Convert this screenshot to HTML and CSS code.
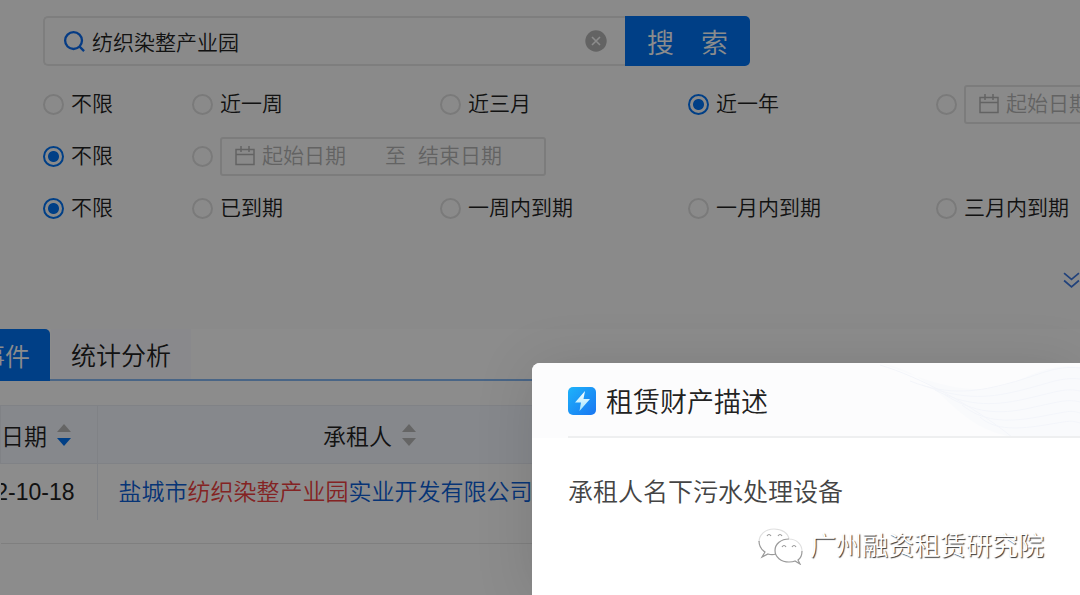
FILE: index.html
```html
<!DOCTYPE html>
<html lang="zh-CN">
<head>
<meta charset="utf-8">
<title>租赁财产描述</title>
<link rel="stylesheet" href="styles.css">
</head>
<body>
<svg class="defs" aria-hidden="true">
  <symbol id="calendar" viewBox="0 0 22 20"><path d="M2 3.500h18v15H2zM2 8.500h18M7 0v6M15 0v6" fill="none" stroke="currentColor" stroke-width="1.5"/></symbol>
</svg>
<main class="page">
  <section class="filters">
    <form class="search">
      <div class="search-box">
        <svg class="search-icon" viewBox="0 0 24 24"><circle cx="11" cy="11" r="8.8"/><path d="M17.3 17.3L22 22"/></svg>
        <input class="search-input" type="text" aria-label="搜索" value="纺织染整产业园">
        <button class="clear" type="button" aria-label="清除"><svg viewBox="0 0 22 22"><circle cx="11" cy="11" r="10.7"/><path d="M7 7l8 8M15 7l-8 8"/></svg></button>
      </div>
      <button class="search-button" type="button">搜&emsp;索</button>
    </form>
    <div class="options">
      <label class="option"><input type="radio" name="publish">不限</label>
      <label class="option"><input type="radio" name="publish">近一周</label>
      <label class="option"><input type="radio" name="publish">近三月</label>
      <label class="option"><input type="radio" name="publish" checked>近一年</label>
      <div class="option"><input type="radio" name="publish" aria-label="自定义日期">
        <div class="range"><svg><use href="#calendar"/></svg><input type="text" aria-label="起始日期" placeholder="起始日期"><span>至</span><input type="text" aria-label="结束日期" placeholder="结束日期"></div>
      </div>
    </div>
    <div class="options">
      <label class="option"><input type="radio" name="start" checked>不限</label>
      <div class="option"><input type="radio" name="start" aria-label="自定义日期">
        <div class="range"><svg><use href="#calendar"/></svg><input type="text" aria-label="起始日期" placeholder="起始日期"><span>至</span><input type="text" aria-label="结束日期" placeholder="结束日期"></div>
      </div>
    </div>
    <div class="options">
      <label class="option"><input type="radio" name="due" checked>不限</label>
      <label class="option"><input type="radio" name="due">已到期</label>
      <label class="option"><input type="radio" name="due">一周内到期</label>
      <label class="option"><input type="radio" name="due">一月内到期</label>
      <label class="option"><input type="radio" name="due">三月内到期</label>
    </div>
    <button class="expand" type="button" aria-label="展开"><svg viewBox="0 0 16 16"><path d="M1 1l7 6 7-6M1 8l7 6 7-6"/></svg></button>
  </section>
  <nav class="tabs">
    <button class="tab tab-active" type="button">事件</button>
    <button class="tab" type="button">统计分析</button>
  </nav>
  <table class="results">
    <thead>
      <tr>
        <th class="date"><div class="head">案日期<svg class="sort" viewBox="0 0 14 22"><path class="off" d="M7 0l7 8H0z"/><path class="on" d="M7 22l7-8H0z"/></svg></div></th>
        <th class="lessee"><div class="head">承租人<svg class="sort" viewBox="0 0 14 22"><path class="off" d="M7 0l7 8H0z"/><path class="off" d="M7 22l7-8H0z"/></svg></div></th>
        <th></th>
      </tr>
    </thead>
    <tbody>
      <tr>
        <td class="date"><div class="cell">2-10-18</div></td>
        <td class="lessee"><a href="#">盐城市<em>纺织染整产业园</em>实业开发有限公司</a></td>
        <td></td>
      </tr>
    </tbody>
  </table>
</main>
<div class="backdrop"></div>
<section class="dialog" role="dialog" aria-labelledby="dialog-title">
  <header class="dialog-head">
    <svg class="waves" viewBox="0 0 200 74" preserveAspectRatio="xMaxYMid slice">
      <path class="wave-fill" d="M0 0C65 12 68 62 132 74H200V4C150-2 140 32 82 25C58 22 38 14 0 0z"/>
      <path d="M0 2C40 14 92 42 132 74M30 18C70 34 100 28 130 20S175 2 200 5M42 22C80 36 105 36 138 28S180 14 200 16M55 27C85 42 110 44 145 36S185 25 200 28M65 32C95 50 118 52 150 45S188 36 200 39M82 42C102 58 125 60 158 54S190 47 200 50M100 54C115 68 140 66 165 62S190 57 200 60"/>
    </svg>
    <svg class="bolt" viewBox="0 0 28 28">
      <defs><linearGradient id="sky" x2="1" y2="1"><stop stop-color="#1eb3fa"/><stop offset="1" stop-color="#1976f2"/></linearGradient><linearGradient id="glow" x2="0" y2="1"><stop stop-color="#fff"/><stop offset="1" stop-color="#9ee4ff"/></linearGradient></defs>
      <rect width="28" height="28" rx="5" fill="url(#sky)"/><path d="M17 4L7 15.500h6L11.500 24 22 12h-6.500z" fill="url(#glow)"/>
    </svg>
    <h2 id="dialog-title">租赁财产描述</h2>
  </header>
  <p class="dialog-text">承租人名下污水处理设备</p>
  <footer class="watermark">
    <svg viewBox="0 0 46 38">
      <path class="faint" d="M16 2C7 2 1 8 1 15M16 2c8 0 14 4 15 10M31 12c7 0 13 5 13 12"/>
      <path d="M1 14c0 6 3 9 6 11l-3 5 6-3c3 1 5 1 8 0"/>
      <path d="M31 12c-8 0-14 5-14 11.500S23 35 31 35c2 0 4 0 6-1l5 3-2-4c3-2 4-5 4-9"/>
      <path d="M9 9q2-3 4 0M20 9q2-3 4 0M24 20q2-3 4 0M34 20q2-3 4 0"/>
    </svg>
    <span>广州融资租赁研究院</span>
  </footer>
</section>
</body>
</html>
```
FILE: styles.css
```css
* { box-sizing: border-box; }
body {
  margin: 0;
  min-height: 100vh;
  overflow: hidden;
  display: grid;
  background: #fff;
  color: #222;
  font-family: "Liberation Sans", "Noto Sans CJK SC", sans-serif;
  font-size: 21px;
  font-weight: 350;
}
button, input { font: inherit; color: inherit; }
button { border: 0; padding: 0; background: none; cursor: pointer; }
svg { display: block; flex: none; }
.defs { position: absolute; width: 0; height: 0; }
.page, .backdrop, .dialog { grid-area: 1 / 1; min-width: 0; }

.filters { padding: 16px 0 40px 43px; overflow: hidden; background: #fcfcfc; }
.search { display: flex; height: 50px; margin-bottom: 12px; }
.search-box {
  flex: 0 1 582px;
  display: flex;
  align-items: center;
  padding: 0 18px;
  border: 2px solid #e6e6e6;
  border-right: 0;
  border-radius: 5px 0 0 5px;
}
.search-icon { width: 23px; height: 23px; fill: none; stroke: #0a6cf0; stroke-width: 2.4; }
.search-input { flex: 1; min-width: 0; padding: 0 6px; border: 0; outline: 0; background: none; }
.clear svg { width: 22px; height: 22px; fill: #b4b4b4; }
.clear path { stroke: #fff; stroke-width: 1.6; }
.search-button {
  flex: 0 0 125px;
  border-radius: 0 5px 5px 0;
  background: #0073f5;
  color: #fff;
  font-size: 27px;
}
.options { display: grid; grid-template-columns: 149px repeat(4, 248px); height: 52px; }
.option { display: flex; align-items: center; gap: 7px; line-height: 24px; white-space: nowrap; }
.option > input {
  appearance: none;
  flex: none;
  width: 21px;
  height: 21px;
  margin: 0;
  border: 2px solid #dedede;
  border-radius: 50%;
}
.option > input:checked {
  border: 2px solid #0073f5;
  background: radial-gradient(circle, #0073f5 5px, transparent 6px);
}
.range {
  flex: 0 0 326px;
  display: flex;
  align-items: center;
  height: 39px;
  padding: 0 11px;
  border: 2px solid #e2e2e2;
  border-radius: 3px;
  color: #b4b4b4;
}
.range svg { width: 24px; height: 20px; margin-right: 5px; }
.range input { width: 111px; padding: 0; border: 0; outline: 0; background: none; }
.range span { margin: 0 12px; }
.range input::placeholder { color: #b4b4b4; opacity: 1; }
.expand { display: block; margin: 38px 0 0 auto; }
.expand svg { width: 17px; height: 17px; fill: none; stroke: #3d78e0; stroke-width: 1.6; }

.tabs { display: flex; gap: 1px; height: 52px; border-bottom: 2px solid #86b8f5; font-size: 25px; }
.tab { padding: 0 20px; background: #f9faff; white-space: nowrap; }
.tab-active {
  width: 50px;
  height: 52px;
  display: flex;
  align-items: center;
  justify-content: flex-end;
  overflow: hidden;
  border-radius: 0 5px 0 0;
  background: #0073f5;
  color: #fff;
}

.results { width: 100%; margin-top: 24px; border-collapse: collapse; table-layout: fixed; font-size: 23px; }
.results th { height: 58px; padding: 0; background: #f5f8ff; border: 1px solid #e9edf5; font-weight: 350; }
.results td { height: 80px; padding: 0; border-bottom: 1px solid #e8e8e8; line-height: 56px; vertical-align: top; white-space: nowrap; }
.results .date { width: 97px; }
.results .lessee { width: 544px; }
.results td.lessee { padding-left: 21px; }
.head { display: flex; align-items: center; justify-content: center; gap: 10px; }
.date .head { justify-content: flex-end; padding-right: 26px; overflow: hidden; white-space: nowrap; }
.cell { display: flex; justify-content: flex-end; padding-right: 22px; overflow: hidden; border-right: 1px solid #e9edf5; }
.sort { width: 14px; height: 22px; }
.off { fill: #b8b8b8; }
.on { fill: #0073f5; }
.results a { color: #0b60d8; text-decoration: none; }
.results em { color: #f04040; font-style: normal; }

.backdrop { z-index: 1; background: rgba(0, 0, 0, .45); }
.dialog {
  z-index: 2;
  margin: 363px 0 0 532px;
  border-radius: 8px 0 0 0;
  overflow: hidden;
  background: #fff;
  box-shadow: 0 4px 60px rgba(0, 0, 0, .12);
}
.dialog-head { position: relative; display: flex; align-items: center; gap: 10px; height: 75px; padding-left: 36px; background: #fcfcfd; }
.dialog-head::after { content: ""; position: absolute; left: 36px; right: 0; bottom: 0; border-bottom: 2px solid #eeeff0; }
.waves { position: absolute; right: 0; top: 0; width: 200px; height: 74px; fill: none; stroke: #f3f5fa; }
.wave-fill { fill: #f9fafc; stroke: none; }
.bolt { width: 28px; height: 28px; }
h2 { margin: 0; color: #222; font-size: 27px; font-weight: 350; }
.dialog-text { margin: 36px 36px 0; color: #444; font-size: 25px; line-height: 36px; }
.watermark {
  display: flex;
  align-items: center;
  justify-content: flex-end;
  gap: 6px;
  margin-top: 17px;
  padding-right: 36px;
  color: #fff;
  font-size: 26px;
  line-height: 38px;
  text-shadow: 1px 1px 1px #333;
}
.watermark svg { width: 46px; height: 38px; fill: none; stroke: #999; stroke-width: 1.2; }
.watermark .faint { stroke: #e0e0e0; }
```
